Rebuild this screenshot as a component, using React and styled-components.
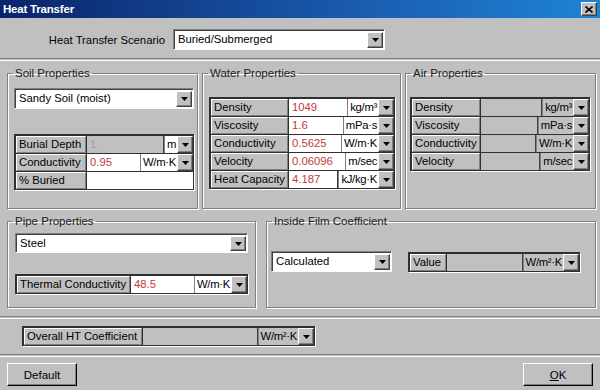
import React from 'react';
import styled, { createGlobalStyle } from 'styled-components';

const GlobalStyle = createGlobalStyle`
  html, body {
    margin: 0;
    padding: 0;
    background: #c0c0c0;
  }
  body {
    font-family: "Liberation Sans", Arial, sans-serif;
  }
`;

const Window = styled.div`
  width: 600px;
  height: 390px;
  background: #c0c0c0;
  overflow: hidden;
  display: flex;
  flex-direction: column;
  font-size: 11.3px;
  color: #000;
`;

const TitleBar = styled.div`
  height: 18px;
  flex: 0 0 18px;
  background: linear-gradient(90deg, #0a246a 0%, #1a5cb0 60%, #1e84d4 100%);
  display: flex;
  align-items: center;
  justify-content: space-between;
  padding: 0 3px 0 3px;
`;

const TitleText = styled.span`
  color: #fff;
  font-weight: bold;
  font-size: 11.5px;
  letter-spacing: -0.2px;
`;

const CloseBtn = styled.div`
  width: 16px;
  height: 14px;
  box-sizing: border-box;
  background: #c0c0c0;
  border: 1px solid;
  border-color: #fff #404040 #404040 #fff;
  box-shadow: inset -1px -1px 0 #808080;
  display: flex;
  align-items: center;
  justify-content: center;
`;

const ScenarioRow = styled.div`
  display: flex;
  align-items: center;
  gap: 8px;
  margin-top: 11px;
  padding-left: 38px;
  height: 21px;
`;

const FieldLabel = styled.span`
  width: 127px;
  text-align: right;
  white-space: nowrap;
`;

const Separator = styled.div`
  height: 1px;
  border-top: 1px solid #808080;
  border-bottom: 1px solid #fff;
  margin-top: ${p => p.$mt}px;
`;

const GroupsRow = styled.div`
  display: grid;
  grid-template-columns: ${p => p.$cols};
  column-gap: ${p => p.$gap}px;
  padding-left: 7px;
  margin-top: ${p => p.$mt}px;
  height: ${p => p.$h}px;
`;

const Group = styled.fieldset`
  margin: 0;
  padding: 0;
  min-width: 0;
  box-sizing: border-box;
  border: 1px solid #808080;
  box-shadow: inset 1px 1px 0 #fff, 1px 1px 0 #fff;
  display: flex;
  flex-direction: column;
`;

const Legend = styled.legend`
  padding: 0 2px;
  margin-left: 5px;
  line-height: 14px;
  font-size: 11.5px;
  color: #202020;
`;

const Slot = styled.div`
  margin: ${p => p.$m};
  width: ${p => (p.$w ? `${p.$w}px` : 'auto')};
`;

const Pair = styled.div`
  display: flex;
  gap: 16px;
  margin: 23px 0 0 4px;
`;

const ComboFrame = styled.div`
  display: flex;
  box-sizing: border-box;
  height: ${p => p.$h || 21}px;
  background: #fff;
  border: 1px solid;
  border-color: #808080 #fff #fff #808080;
  box-shadow: inset 1px 1px 0 #404040;
  padding: 2px 1px 1px 2px;
`;

const ComboText = styled.span`
  flex: 1;
  padding-left: 2px;
  line-height: 15px;
  white-space: nowrap;
  overflow: hidden;
`;

const ArrowBox = styled.div`
  width: 16px;
  flex: 0 0 16px;
  align-self: stretch;
  box-sizing: border-box;
  background: #c0c0c0;
  border: 1px solid;
  border-color: #fff #404040 #404040 #fff;
  box-shadow: inset -1px -1px 0 #808080;
  display: flex;
  align-items: center;
  justify-content: center;
`;

const Arrow = () => (
  <ArrowBox>
    <svg width="7" height="4" viewBox="0 0 7 4">
      <path d="M0 0h7L3.5 4z" fill="#000" />
    </svg>
  </ArrowBox>
);

const Combo = ({ text, h }) => (
  <ComboFrame $h={h}>
    <ComboText>{text}</ComboText>
    <Arrow />
  </ComboFrame>
);

const PropTable = styled.div`
  display: flex;
  flex-direction: column;
  box-sizing: border-box;
  border-style: solid;
  border-width: 2px 1px 1px 2px;
  border-color: #303030;
  box-shadow: 1px 1px 0 #fff;
`;

const PropRow = styled.div`
  display: flex;
  height: 17px;
  & + & {
    border-top: 1px solid #303030;
  }
`;

const CellLabel = styled.div`
  width: ${p => p.$w}px;
  flex: 0 0 ${p => p.$w}px;
  box-sizing: border-box;
  background: #c0c0c0;
  border: 1px solid;
  border-color: #fff #808080 #808080 #fff;
  box-shadow: 1px 0 0 #303030;
  margin-right: 1px;
  padding-left: 2px;
  line-height: 15px;
  white-space: nowrap;
  overflow: hidden;
`;

const CellValue = styled.div`
  flex: 1;
  min-width: 0;
  background: ${p => (p.$gray ? '#c0c0c0' : '#fff')};
  color: ${p => (p.$dim ? '#a0a0a0' : '#c03a3a')};
  padding-left: 3px;
  line-height: 17px;
  white-space: nowrap;
  border-right: ${p => (p.$edge ? '1px solid #404040' : 'none')};
`;

const UnitCell = styled.div`
  background: ${p => (p.$gray ? '#c0c0c0' : '#fff')};
  border-left: 1px solid #808080;
  padding: 0 1px 0 2px;
  line-height: 17px;
  white-space: nowrap;
  letter-spacing: -0.3px;
`;

const Prop = ({ label, lw, value, unit, gray, unitGray, dim, edge }) => (
  <PropRow>
    <CellLabel $w={lw}>{label}</CellLabel>
    <CellValue $gray={gray} $dim={dim} $edge={edge}>{value}</CellValue>
    {unit && <UnitCell $gray={unitGray ?? gray}>{unit}</UnitCell>}
    {unit && <Arrow />}
  </PropRow>
);

const BottomRow = styled.div`
  display: flex;
  justify-content: space-between;
  padding: 0 7px;
  margin-top: 6px;
`;

const PushButton = styled.button`
  width: 70px;
  height: 23px;
  padding: 0;
  font-family: "Liberation Sans", Arial, sans-serif;
  font-size: 11.5px;
  color: #000;
  background: #c0c0c0;
  border: 1px solid;
  border-color: #fff #000 #000 #fff;
  box-shadow: inset -1px -1px 0 #808080;
`;

const waterRows = [
  ['Density', '1049', 'kg/m³'],
  ['Viscosity', '1.6', 'mPa·s'],
  ['Conductivity', '0.5625', 'W/m·K'],
  ['Velocity', '0.06096', 'm/sec'],
  ['Heat Capacity', '4.187', 'kJ/kg·K'],
];

const airRows = [
  ['Density', 'kg/m³'],
  ['Viscosity', 'mPa·s'],
  ['Conductivity', 'W/m·K'],
  ['Velocity', 'm/sec'],
];

export default function App() {
  return (
    <Window>
      <GlobalStyle />
      <TitleBar>
        <TitleText>Heat Transfer</TitleText>
        <CloseBtn>
          <svg width="8" height="7" viewBox="0 0 8 7">
            <path d="M0.5 0.5L7.5 6.5M7.5 0.5L0.5 6.5" stroke="#000" strokeWidth="1.6" />
          </svg>
        </CloseBtn>
      </TitleBar>

      <ScenarioRow>
        <FieldLabel>Heat Transfer Scenario</FieldLabel>
        <Slot $m="0" $w={212}>
          <Combo text="Buried/Submerged" />
        </Slot>
      </ScenarioRow>

      <Separator $mt={8} />

      <GroupsRow $cols="191px 199px 191px" $gap={4} $mt={5} $h={143}>
        <Group>
          <Legend>Soil Properties</Legend>
          <Slot $m="8px 3px 0 6px">
            <Combo text="Sandy Soil (moist)" />
          </Slot>
          <Slot $m="25px 3px 0 6px">
            <PropTable>
              <Prop label="Burial Depth" lw={70} value="1" unit="m" gray unitGray={false} dim edge />
              <Prop label="Conductivity" lw={70} value="0.95" unit="W/m·K" />
              <Prop label="% Buried" lw={70} value="" />
            </PropTable>
          </Slot>
        </Group>

        <Group>
          <Legend>Water Properties</Legend>
          <Slot $m="17px 5px 0 6px">
            <PropTable>
              {waterRows.map(([l, v, u]) => (
                <Prop key={l} label={l} lw={77} value={v} unit={u} edge={l === 'Heat Capacity'} />
              ))}
            </PropTable>
          </Slot>
        </Group>

        <Group>
          <Legend>Air Properties</Legend>
          <Slot $m="17px 5px 0 4px">
            <PropTable>
              {airRows.map(([l, u]) => (
                <Prop key={l} label={l} lw={68} value="" unit={u} gray edge />
              ))}
            </PropTable>
          </Slot>
        </Group>
      </GroupsRow>

      <GroupsRow $cols="249px 330px" $gap={10} $mt={5} $h={94}>
        <Group>
          <Legend>Pipe Properties</Legend>
          <Slot $m="5px 7px 0 7px">
            <Combo text="Steel" h={20} />
          </Slot>
          <Slot $m="21px 7px 0 7px">
            <PropTable>
              <Prop label="Thermal Conductivity" lw={113} value="48.5" unit="W/m·K" />
            </PropTable>
          </Slot>
        </Group>

        <Group>
          <Legend>Inside Film Coefficient</Legend>
          <Pair>
            <Slot $m="0" $w={121}>
              <Combo text="Calculated" />
            </Slot>
            <Slot $m="1px 0 0 0" $w={172}>
              <PropTable>
                <Prop label="Value" lw={36} value="" unit="W/m²·K" gray edge />
              </PropTable>
            </Slot>
          </Pair>
        </Group>
      </GroupsRow>

      <Separator $mt={8} />

      <Slot $m="7px 0 0 22px" $w={293}>
        <PropTable>
          <Prop label="Overall HT Coefficient" lw={118} value="" unit="W/m²·K" gray edge />
        </PropTable>
      </Slot>

      <Separator $mt={8} />

      <BottomRow>
        <PushButton>Default</PushButton>
        <PushButton>
          <u>O</u>K
        </PushButton>
      </BottomRow>
    </Window>
  );
}
